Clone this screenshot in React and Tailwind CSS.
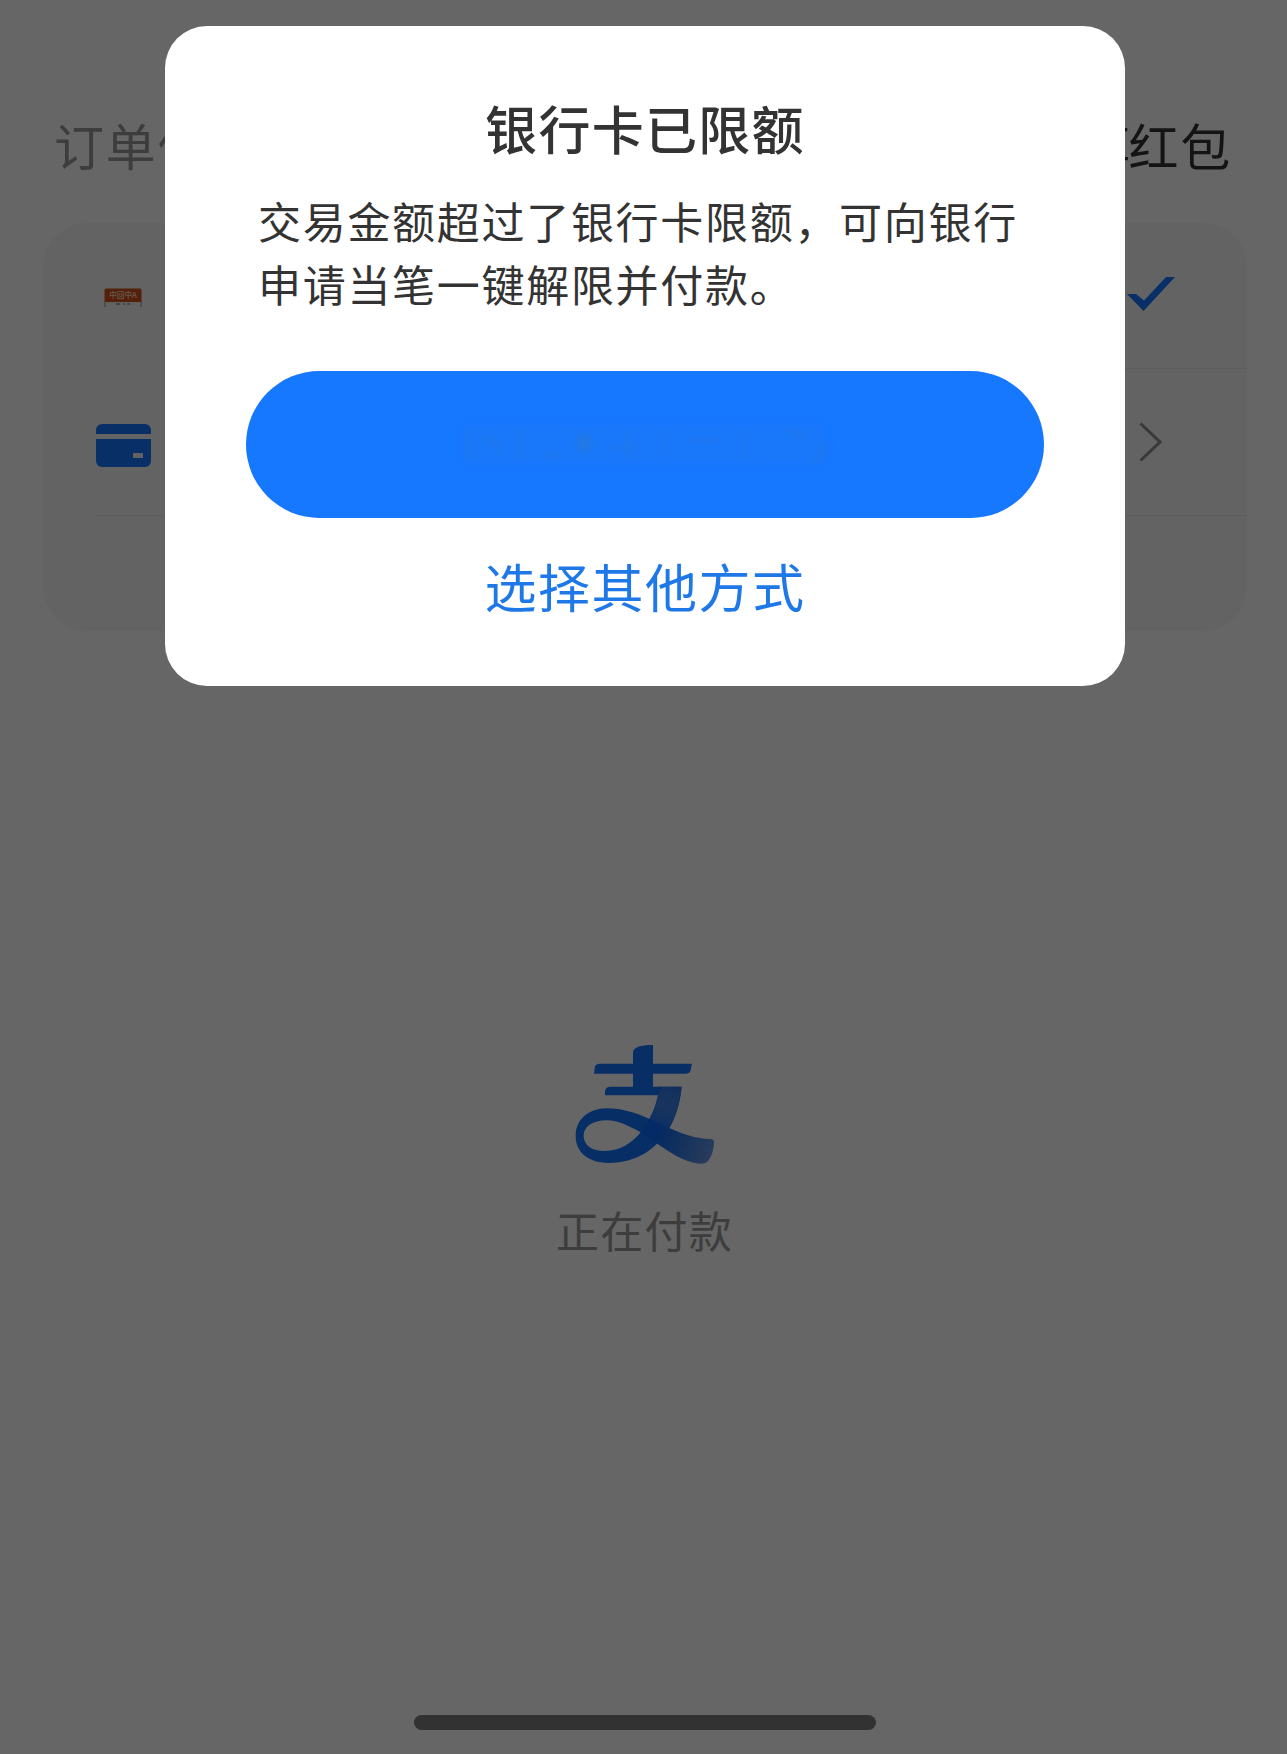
import React from 'react';

function BankLogo() {
  return (
    <svg viewBox="0 0 38 22" className="w-[38px] h-[22px]">
      <path d="M1 13V19M37 13V19" stroke="#6a625c" strokeWidth="0.8" />
      <rect x="1" y="13.5" width="36" height="4" fill="#f1efee" opacity="0.5" />
      <rect x="0.5" y="0.5" width="37" height="13.5" rx="1.500" fill="#d2501c" />
      <text x="19" y="10" textAnchor="middle" fontSize="7.6" fontWeight="500" fill="#ffdcc0" fontFamily="Noto Sans CJK SC, sans-serif">
        中回中A
      </text>
      <path d="M12 16H16M19 16H21M23.500 16H26" stroke="#6b6461" strokeWidth="1" />
    </svg>
  );
}

function CardIcon() {
  return (
    <svg viewBox="0 0 55 43" className="w-[55px] h-[43px]">
      <path d="M6 0H49A6 6 0 0 1 55 6V10H0V6A6 6 0 0 1 6 0Z" fill="#1677ff" />
      <path d="M0 15H55V37A6 6 0 0 1 49 43H6A6 6 0 0 1 0 37Z" fill="#1677ff" />
      <rect x="37" y="29" width="10" height="5" fill="#f5f5f5" />
    </svg>
  );
}

function CheckIcon() {
  return (
    <svg viewBox="0 0 48 34" className="w-12 h-[34px]">
      <path d="M0 17H9L17 23.500L39 0H48L16.500 34Z" fill="#1677ff" />
    </svg>
  );
}

function ChevronIcon() {
  return (
    <svg viewBox="0 0 23 40" className="w-[23px] h-10" fill="none">
      <path d="M1.500 1.500L21 20L1.500 38.500" stroke="#8f8f8f" strokeWidth="3" />
    </svg>
  );
}

function PayLogo() {
  return (
    <svg viewBox="105 70 420 363" className="w-[140px] h-[121px]">
      <defs>
        <linearGradient id="tail" gradientUnits="userSpaceOnUse" x1="350" y1="330" x2="525" y2="400">
          <stop offset="0" stopColor="#0a6cff" />
          <stop offset="0.25" stopColor="#1f72ea" />
          <stop offset="1" stopColor="#6d9ae6" />
        </linearGradient>
        <linearGradient id="stem" gradientUnits="userSpaceOnUse" x1="400" y1="200" x2="345" y2="330">
          <stop offset="0" stopColor="#3079e8" />
          <stop offset="0.450" stopColor="#3f83ea" />
          <stop offset="1" stopColor="#1573ff" />
        </linearGradient>
      </defs>
      <path
        d="M358 198H425C420 250 408 285 388 322C350 385 290 427 205 427C140 425 107 392 107 345C107 298 145 263 200 263C250 263 290 278 328 295C342 270 352 240 358 198ZM302 335C270 318 235 299 200 299C158 299 131 318 131 345C131 373 155 391 195 391C240 391 275 368 302 335Z"
        fill="#1573ff"
        fillRule="evenodd"
      />
      <path d="M350 198H425C420 245 408 288 388 322L328 295C342 270 352 240 356 223H350Z" fill="url(#stem)" />
      <path
        d="M328 295C350 304 370 314 388 322C430 342 470 354 514 355Q523 356 522 368C520 392 514 412 502 423Q495 430 480 429C430 425 385 392 349 367L302 335Z"
        fill="url(#tail)"
      />
      <path
        d="M279 129V96C279 80 300 73 339 73V129H456L452 149Q449 159 439 159H339V198H365L356 224H195V212Q196 198 211 198H279V159H162L164 141Q166 129 180 129Z"
        fill="#1573ff"
      />
    </svg>
  );
}

// Faint residue where the primary action label is masked
function MaskedLabel() {
  return (
    <svg viewBox="0 0 370 56" className="w-[370px] h-14 blur-[3px]">
      <rect x="4" y="8" width="360" height="40" rx="8" fill="#1c78f4" opacity="0.45" />
      <path d="M8 14V44M24 18L42 34M60 12V42M84 38H100" stroke="#2379e2" strokeWidth="6" opacity="0.5" />
      <ellipse cx="124" cy="26" rx="8" ry="10" fill="#2b7ad0" opacity="0.5" />
      <path d="M150 30H182M170 14V44M206 16V38M230 24H256M286 16V40" stroke="#2879e6" strokeWidth="5" opacity="0.45" />
      <path d="M328 12L344 22M356 46L366 26" stroke="#3079cc" strokeWidth="5" opacity="0.35" />
    </svg>
  );
}

function PaymentPage() {
  return (
    <div className="h-full flex flex-col bg-white">
      <div className="h-[223px] pt-[114px] pl-[54px] pr-[55px] flex justify-between items-start text-[50px] leading-[60px] tracking-[1.700px]">
        <div className="text-[#999999]">订单信息</div>
        <div className="text-[#333333]">
          <span className="tracking-[-2px]">享</span>红包
        </div>
      </div>

      <div className="mx-[43px] mr-[40px] h-[408px] rounded-[44px] bg-[#f7f7f7] flex flex-col">
        <div className="h-[145px] pl-[61px] pr-[72px] flex items-center justify-between">
          <div className="pt-[6px]">
            <BankLogo />
          </div>
          <div className="pb-[3px]">
            <CheckIcon />
          </div>
        </div>
        <div className="ml-[180px] h-px bg-[#e5e5e5]" />
        <div className="h-[146px] pl-[53px] pr-[85px] flex items-center justify-between">
          <div className="pt-[6px]">
            <CardIcon />
          </div>
          <ChevronIcon />
        </div>
        <div className="ml-[53px] h-px bg-[#e5e5e5]" />
      </div>

      <div className="mt-[413px] pl-[2px] flex flex-col items-center">
        <PayLogo />
        <div className="mt-[34px] text-[43px] leading-[60px] tracking-[1.300px] text-[#999999]">正在付款</div>
      </div>

      <div className="mt-auto mb-6 ml-[3px] self-center w-[462px] h-[15px] rounded-full bg-[#7d7d7d]" />
    </div>
  );
}

function LimitDialog() {
  return (
    <div className="w-[960px] h-[660px] rounded-[42px] bg-white flex flex-col items-center">
      <div className="mt-[70px] text-[52px] leading-[64px] tracking-[1.300px] font-medium text-[#333333]">银行卡已限额</div>
      <div className="mt-[29px] pl-[3px] w-[780px] text-[43px] leading-[63px] tracking-[1.700px] text-[#333333]">
        <div>交易金额超过了银行卡限额，可向银行</div>
        <div>申请当笔一键解限并付款。</div>
      </div>
      <button className="mt-[56px] w-[798px] h-[147px] rounded-full bg-[#1677ff] flex items-center justify-center">
        <MaskedLabel />
      </button>
      <button className="mt-[36px] text-[52px] leading-[64px] tracking-[1.500px] text-[#1f78e8]">选择其他方式</button>
    </div>
  );
}

export default function App() {
  return (
    <div className="relative w-[1287px] h-[1754px] overflow-hidden font-['Noto_Sans_CJK_SC',sans-serif]">
      <PaymentPage />
      <div className="absolute inset-0 bg-black/60 pt-[26px] pl-[165px]">
        <LimitDialog />
      </div>
    </div>
  );
}
